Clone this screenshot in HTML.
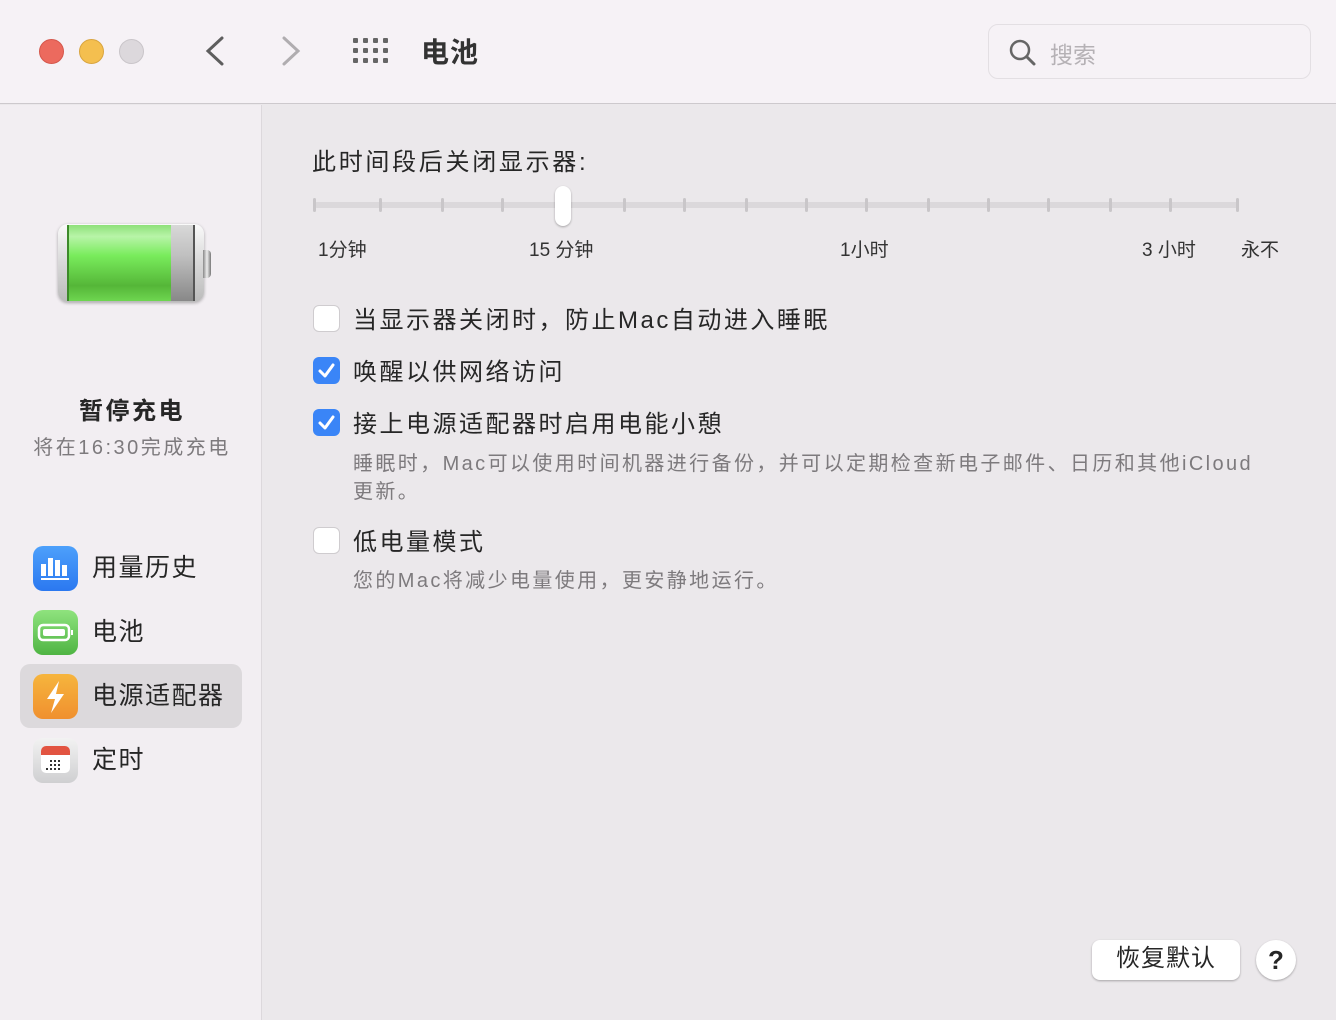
<!DOCTYPE html>
<html><head><meta charset="utf-8"><style>
*{margin:0;padding:0;box-sizing:border-box}
body{width:1336px;height:1020px;overflow:hidden;background:#ebe8eb;font-family:"Liberation Sans","Noto Sans CJK SC",sans-serif;color:#262626;position:relative}
.a{position:absolute;white-space:nowrap}
.top{left:0;top:0;width:1336px;height:104px;background:#f6f2f6;border-bottom:1px solid #cdc9cd}
.side{left:0;top:105px;width:262px;height:915px;background:#f2eef2;border-right:1px solid #dcd8dc}
.dot{width:25px;height:25px;border-radius:50%;top:39px}
.tick{width:3px;height:14px;background:#c9c6c9;border-radius:2px;top:198px}
.cb{width:27px;height:27px;border-radius:6px;left:313px}
.cb.off{background:#fff;border:1px solid #cfcccf}
.cb.on{background:#3a85f7}
.lbl{font-size:24px;color:#262626;left:353px;letter-spacing:2.5px}
.sub{font-size:20px;color:#7d7a7d;left:353px;letter-spacing:2.4px}
.ico{width:45px;height:45px;border-radius:10px;left:33px}
.sl{font-size:25px;left:92px;letter-spacing:1.5px}
.tl{font-size:19px;top:235px;color:#333}
</style></head><body>
<div class="a top"></div>
<div class="a dot" style="left:39px;background:#ec6a5e;border:1px solid #d5574c"></div>
<div class="a dot" style="left:79px;background:#f4bf4f;border:1px solid #d9a53f"></div>
<div class="a dot" style="left:119px;background:#dcd8dc;border:1px solid #c9c5c9"></div>
<svg class="a" style="left:200px;top:34px" width="110" height="34"><path d="M22 4 L8 17 L22 30" stroke="#5e5e5e" stroke-width="3" fill="none" stroke-linecap="round"/><path d="M84 4 L98 17 L84 30" stroke="#b0adb0" stroke-width="3" fill="none" stroke-linecap="round"/></svg>
<svg class="a" style="left:353px;top:38px" width="38" height="28"><g fill="#666"><rect x="0" y="0" width="5" height="5" rx="1"/><rect x="10" y="0" width="5" height="5" rx="1"/><rect x="20" y="0" width="5" height="5" rx="1"/><rect x="30" y="0" width="5" height="5" rx="1"/><rect x="0" y="10" width="5" height="5" rx="1"/><rect x="10" y="10" width="5" height="5" rx="1"/><rect x="20" y="10" width="5" height="5" rx="1"/><rect x="30" y="10" width="5" height="5" rx="1"/><rect x="0" y="20" width="5" height="5" rx="1"/><rect x="10" y="20" width="5" height="5" rx="1"/><rect x="20" y="20" width="5" height="5" rx="1"/><rect x="30" y="20" width="5" height="5" rx="1"/></g></svg>
<div class="a" style="left:421px;top:31px;font-size:28px;font-weight:bold;color:#333;letter-spacing:1px">电池</div>
<div class="a" style="left:988px;top:24px;width:323px;height:55px;border:1px solid #e3dfe3;border-radius:10px;background:#f6f2f6"></div>
<svg class="a" style="left:1008px;top:38px" width="30" height="30"><circle cx="12" cy="12" r="9" stroke="#666" stroke-width="2.5" fill="none"/><path d="M19 19 L26 26" stroke="#666" stroke-width="3" stroke-linecap="round"/></svg>
<div class="a" style="left:1050px;top:36px;font-size:23px;color:#b5b1b5">搜索</div>

<div class="a side"></div>
<div class="a" style="left:58px;top:224px;width:146px;height:78px;border-radius:10px;background:linear-gradient(#fafafa,#d8d8d8 50%,#bbb);box-shadow:0 1px 3px rgba(0,0,0,.3)"></div>
<div class="a" style="left:67px;top:225px;width:104px;height:76px;background:linear-gradient(#8ee07a,#b8f4a8 15%,#79ec5c 40%,#55b638 80%,#6ed650);border-left:2px solid #3d8a2a"></div>
<div class="a" style="left:171px;top:225px;width:24px;height:76px;background:linear-gradient(#d8d8d8,#c0c0c0 40%,#888);border-right:2px solid #555"></div>
<div class="a" style="left:203px;top:250px;width:8px;height:28px;border-radius:0 4px 4px 0;background:linear-gradient(90deg,#888,#eee,#777)"></div>
<div class="a" style="left:0;width:262px;text-align:center;top:391px;font-size:24px;font-weight:bold;color:#262626;letter-spacing:2.5px;padding-left:2px">暂停充电</div>
<div class="a" style="left:0;width:262px;text-align:center;top:431px;font-size:20px;color:#7d7a7d;letter-spacing:2.5px;padding-left:2px">将在16:30完成充电</div>

<div class="a" style="left:20px;top:664px;width:222px;height:64px;border-radius:10px;background:#dcd9dc"></div>
<div class="a ico" style="top:546px;background:linear-gradient(#4da0fb,#2b78f0)"><svg width="45" height="45"><g fill="#fff"><rect x="8" y="18" width="5" height="12"/><rect x="15" y="12" width="5" height="18"/><rect x="22" y="14" width="5" height="16"/><rect x="29" y="19" width="5" height="11"/><rect x="8" y="32" width="28" height="2"/></g></svg></div>
<div class="a sl" style="top:548px">用量历史</div>
<div class="a ico" style="top:610px;background:linear-gradient(#8fe37e,#4fb443)"><svg width="45" height="45"><rect x="6" y="15" width="30" height="15" rx="4" stroke="#fff" stroke-width="2.5" fill="none"/><rect x="10" y="19" width="22" height="7" rx="2" fill="#fff"/><rect x="38" y="20" width="2" height="5" fill="#fff"/></svg></div>
<div class="a sl" style="top:612px">电池</div>
<div class="a ico" style="top:674px;background:linear-gradient(#f6b53d,#f0902f)"><svg width="45" height="45"><path d="M26 7 L14 25 L22 25 L18 39 L31 20 L23 20 Z" fill="#fff"/></svg></div>
<div class="a sl" style="top:676px">电源适配器</div>
<div class="a ico" style="top:738px;background:linear-gradient(#f2f2f2,#cfcfd1)"><svg width="45" height="45"><rect x="8" y="8" width="29" height="27" rx="5" fill="#fff"/><path d="M8 13 a5 5 0 0 1 5 -5 h19 a5 5 0 0 1 5 5 v4 h-29z" fill="#e25441"/><g fill="#333"><rect x="17" y="22" width="2" height="2"/><rect x="21" y="22" width="2" height="2"/><rect x="25" y="22" width="2" height="2"/><rect x="17" y="26" width="2" height="2"/><rect x="21" y="26" width="2" height="2"/><rect x="25" y="26" width="2" height="2"/><rect x="13" y="30" width="2" height="2"/><rect x="17" y="30" width="2" height="2"/><rect x="21" y="30" width="2" height="2"/><rect x="25" y="30" width="2" height="2"/></g></svg></div>
<div class="a sl" style="top:740px">定时</div>

<div class="a" style="left:312px;top:142px;font-size:24px;letter-spacing:2.7px">此时间段后关闭显示器:</div>
<div class="a" style="left:314px;top:202px;width:925px;height:6px;background:#dbd8db;border-radius:3px"></div>
<div class="a tick" style="left:313px"></div><div class="a tick" style="left:379px"></div><div class="a tick" style="left:441px"></div><div class="a tick" style="left:501px"></div><div class="a tick" style="left:623px"></div><div class="a tick" style="left:683px"></div><div class="a tick" style="left:745px"></div><div class="a tick" style="left:805px"></div><div class="a tick" style="left:865px"></div><div class="a tick" style="left:927px"></div><div class="a tick" style="left:987px"></div><div class="a tick" style="left:1047px"></div><div class="a tick" style="left:1109px"></div><div class="a tick" style="left:1169px"></div><div class="a tick" style="left:1236px"></div>
<div class="a" style="left:555px;top:186px;width:16px;height:40px;border-radius:8px;background:#fff;box-shadow:0 1px 2px rgba(0,0,0,.3)"></div>
<div class="a tl" style="left:318px">1分钟</div>
<div class="a tl" style="left:529px">15 分钟</div>
<div class="a tl" style="left:840px">1小时</div>
<div class="a tl" style="left:1142px">3 小时</div>
<div class="a tl" style="left:1241px">永不</div>

<div class="a cb off" style="top:305px"></div>
<div class="a lbl" style="top:300px">当显示器关闭时，防止Mac自动进入睡眠</div>
<div class="a cb on" style="top:357px"><svg width="27" height="27"><path d="M7 14 L12 19 L20 8" stroke="#fff" stroke-width="3" fill="none" stroke-linecap="round" stroke-linejoin="round"/></svg></div>
<div class="a lbl" style="top:352px">唤醒以供网络访问</div>
<div class="a cb on" style="top:409px"><svg width="27" height="27"><path d="M7 14 L12 19 L20 8" stroke="#fff" stroke-width="3" fill="none" stroke-linecap="round" stroke-linejoin="round"/></svg></div>
<div class="a lbl" style="top:404px">接上电源适配器时启用电能小憩</div>
<div class="a sub" style="top:447px">睡眠时，Mac可以使用时间机器进行备份，并可以定期检查新电子邮件、日历和其他iCloud</div>
<div class="a sub" style="top:475px">更新。</div>
<div class="a cb off" style="top:527px"></div>
<div class="a lbl" style="top:522px">低电量模式</div>
<div class="a sub" style="top:564px">您的Mac将减少电量使用，更安静地运行。</div>

<div class="a" style="left:1092px;top:940px;width:148px;height:40px;border-radius:8px;background:#fff;box-shadow:0 1px 2px rgba(0,0,0,.3);font-size:24px;text-align:center;line-height:38px;letter-spacing:1px">恢复默认</div>
<div class="a" style="left:1256px;top:940px;width:40px;height:40px;border-radius:50%;background:#fff;box-shadow:0 1px 2px rgba(0,0,0,.3);font-size:26px;font-weight:bold;text-align:center;line-height:40px">?</div>
</body></html>
